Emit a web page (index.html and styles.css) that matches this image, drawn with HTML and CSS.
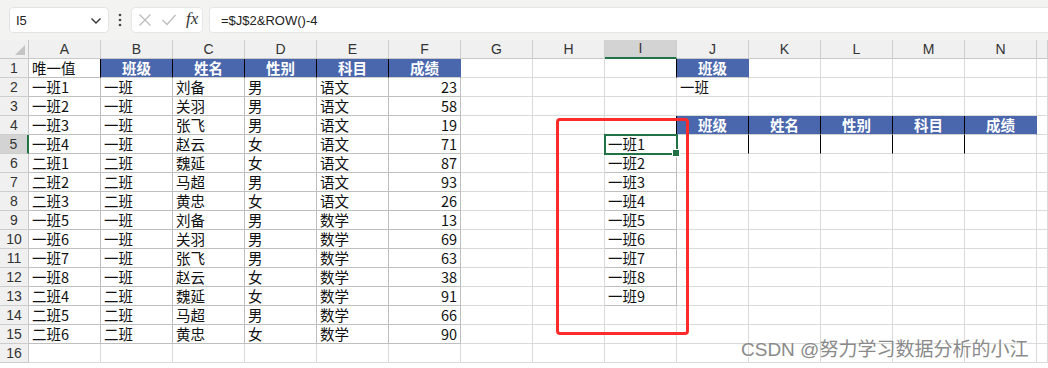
FILE: index.html
```html
<html>
<head>
	<title>Sheet1</title>
	<meta charset="utf-8">
	<link rel="stylesheet" href="styles.css">
</head>
<body>
	<div class="toolbar">
		<div class="namebox">
			<span>I5</span>
			<svg class="chev" width="12" height="8" viewBox="0 0 12 8"><polyline points="1.5,1.5 6,6 10.5,1.5" fill="none" stroke="#333" stroke-width="1.4"/></svg>
		</div>
		<div class="dots">
			<svg width="4" height="14" viewBox="0 0 4 14"><circle cx="2" cy="2" r="1.3" fill="#444"/><circle cx="2" cy="7" r="1.3" fill="#444"/><circle cx="2" cy="12" r="1.3" fill="#444"/></svg>
		</div>
		<div class="fxbox">
			<svg width="14" height="14" viewBox="0 0 14 14"><path d="M1.5 1.5 L12.5 12.5 M12.5 1.5 L1.5 12.5" stroke="#bdbdbd" stroke-width="1.3" fill="none"/></svg>
			<svg width="16" height="14" viewBox="0 0 16 14"><polyline points="1.5,7 6,11.5 14.5,2" stroke="#bdbdbd" stroke-width="1.3" fill="none"/></svg>
			<span class="fx">fx</span>
		</div>
		<div class="formula">=$J$2&amp;ROW()-4</div>
	</div>

	<div class="sheet" id="sheet"></div>

	<div class="redbox"></div>
	<div class="watermark">CSDN @努力学习数据分析的小江</div>

	<script type="text/javascript">

		var letters = 'ABCDEFGHIJKLMNO';
		var heads = ['班级', '姓名', '性别', '科目', '成绩'];
		var rows = [
			['一班1', '一班', '刘备', '男', '语文', 23],
			['一班2', '一班', '关羽', '男', '语文', 58],
			['一班3', '一班', '张飞', '男', '语文', 19],
			['一班4', '一班', '赵云', '女', '语文', 71],
			['二班1', '二班', '魏延', '女', '语文', 87],
			['二班2', '二班', '马超', '男', '语文', 93],
			['二班3', '二班', '黄忠', '女', '语文', 26],
			['一班5', '一班', '刘备', '男', '数学', 13],
			['一班6', '一班', '关羽', '男', '数学', 69],
			['一班7', '一班', '张飞', '男', '数学', 63],
			['一班8', '一班', '赵云', '女', '数学', 38],
			['二班4', '二班', '魏延', '女', '数学', 91],
			['二班5', '二班', '马超', '男', '数学', 66],
			['二班6', '二班', '黄忠', '女', '数学', 90]
		];

		// cell contents, keyed like "B1"
		var cells = {};
		cells['A1'] = { t: '唯一值', cls: 'tbl bk' };
		for (var h = 0; h < 5; h++) {
			cells[letters[h + 1] + '1'] = { t: heads[h], cls: 'hd' + (h < 4 ? ' bk' : '') };
			cells[letters[h + 9] + '4'] = { t: heads[h], cls: 'hd' + (h < 4 ? ' bk' : '') };
		}
		for (var r = 0; r < rows.length; r++) {
			for (var c = 0; c < 6; c++) {
				cells[letters[c] + (r + 2)] = { t: rows[r][c], cls: 'tbl' + (c == 5 ? ' num' : '') };
			}
		}
		cells['I1'] = { t: '', cls: 'bk' };
		cells['J1'] = { t: '班级', cls: 'hd' };
		cells['I4'] = { t: '', cls: 'bk' };
		cells['J2'] = { t: '一班', cls: '' };
		for (var k = 1; k <= 9; k++) {
			cells['I' + (k + 4)] = { t: '一班' + k, cls: 'tbl' + (k == 1 ? ' sel' : '') };
		}
		cells['J5'] = { t: '', cls: 'bk' };
		cells['K5'] = { t: '', cls: 'bk' };
		cells['L5'] = { t: '', cls: 'bk' };
		cells['M5'] = { t: '', cls: 'bk' };

		var sheet = document.getElementById('sheet');
		var html = '<div class="corner"></div>';
		for (var c = 0; c < letters.length; c++) {
			html += '<div class="colhd' + (letters[c] == 'I' ? ' on' : '') + '">' + (letters[c] == 'O' ? '' : letters[c]) + '</div>';
		}
		for (var r = 1; r <= 16; r++) {
			html += '<div class="rowhd' + (r == 5 ? ' on' : '') + '">' + r + '</div>';
			for (var c = 0; c < letters.length; c++) {
				var cell = cells[letters[c] + r];
				if (cell) html += '<div class="c ' + cell.cls + '">' + cell.t + '</div>';
				else html += '<div class="c"></div>';
			}
		}
		sheet.innerHTML = html;

	</script>
</body>
</html>
```

FILE: styles.css
```css
body {
	margin: 0;
	overflow: hidden;
	background: #fff;
	font-family: "Liberation Sans", Arial, sans-serif;
	position: relative;
	width: 1048px;
	height: 368px;
}

/* formula bar */
.toolbar {
	height: 40px;
	box-sizing: border-box;
	padding: 7px 0 0 9px;
	background: #f3f3f1;
	display: flex;
	align-items: flex-start;
}
.namebox {
	width: 100px;
	height: 26px;
	box-sizing: border-box;
	background: #fff;
	border: 1px solid #e3e3e3;
	border-radius: 4px;
	display: flex;
	align-items: center;
	justify-content: space-between;
	padding: 0 6px 0 6px;
	font-size: 13px;
	color: #222;
}
.chev { margin-top: 1px; }
.dots {
	width: 22px;
	height: 26px;
	display: flex;
	align-items: center;
	justify-content: center;
}
.fxbox {
	width: 72px;
	height: 26px;
	box-sizing: border-box;
	background: #fff;
	border: 1px solid #e6e6e6;
	border-radius: 4px;
	display: flex;
	align-items: center;
	gap: 9px;
	padding-left: 6px;
}
.fx {
	font-family: "Liberation Serif", serif;
	font-style: italic;
	font-size: 17px;
	color: #333;
	margin-top: -3px;
}
.formula {
	flex: 1;
	height: 26px;
	margin-left: 6px;
	box-sizing: border-box;
	background: #fff;
	border: 1px solid #e6e6e6;
	border-right: none;
	border-radius: 4px 0 0 4px;
	padding-left: 11px;
	line-height: 25px;
	font-size: 13px;
	color: #222;
}

/* grid */
.sheet {
	display: grid;
	grid-template-columns: 29px repeat(14, 72px) 11px;
	grid-template-rows: 19px;
	grid-auto-rows: 19px;
}
.sheet > div {
	box-sizing: border-box;
	border-right: 1px solid #dadada;
	border-bottom: 1px solid #dadada;
	white-space: nowrap;
}
.corner {
	background: #f0f0f0;
	position: relative;
	border-right-color: #c8c8c8 !important;
	border-bottom-color: #c8c8c8 !important;
}
.corner::after {
	content: "";
	position: absolute;
	right: 3px;
	bottom: 3px;
	border-left: 10px solid transparent;
	border-bottom: 10px solid #c4c4c4;
}
.colhd {
	background: #f0f0f0;
	text-align: center;
	font-size: 14px;
	line-height: 18px;
	color: #333;
	border-right-color: #cdcdcd !important;
	border-bottom-color: #c8c8c8 !important;
}
.rowhd {
	background: #f0f0f0;
	text-align: center;
	font-size: 14px;
	line-height: 19px;
	color: #333;
	border-right-color: #c8c8c8 !important;
	border-bottom-color: #cdcdcd !important;
}
.colhd.on {
	background: #d3d3d3;
	border-bottom: 2px solid #217346 !important;
	line-height: 17px;
}
.rowhd.on {
	background: #d3d3d3;
	border-right: 2px solid #217346 !important;
}
.c {
	font-family: "Noto Sans CJK SC", sans-serif;
	font-size: 14.5px;
	line-height: 18px;
	color: #111;
	padding-left: 3px;
}
.c.tbl {
	border-right-color: #bfbfbf;
	border-bottom-color: #bfbfbf;
}
.c.num {
	text-align: right;
	padding-right: 3px;
}
.c.hd {
	background: #4a67ad;
	color: #fff;
	font-weight: bold;
	text-align: center;
	padding-left: 0;
	border-right-color: #4a67ad;
	border-bottom-color: #d0d0d0;
}
.c.bk {
	border-right-color: #000;
}
.c.sel {
	position: relative;
	outline: 2px solid #217346;
	outline-offset: -1px;
	z-index: 2;
}
.c.sel::after {
	content: "";
	position: absolute;
	right: -4px;
	bottom: -4px;
	width: 6px;
	height: 6px;
	background: #217346;
	border: 1px solid #fff;
}

/* overlays */
.redbox {
	position: absolute;
	left: 556px;
	top: 118px;
	width: 133px;
	height: 217px;
	box-sizing: border-box;
	border: 3px solid #ff2a2a;
	border-radius: 4px;
	z-index: 3;
}
.watermark {
	position: absolute;
	left: 741px;
	top: 339px;
	font-family: "Liberation Sans", "Noto Sans CJK SC", sans-serif;
	font-size: 19px;
	line-height: 22px;
	color: #8a8a8a;
	text-shadow: 1px 1px 0 #fff;
	z-index: 4;
}
```
